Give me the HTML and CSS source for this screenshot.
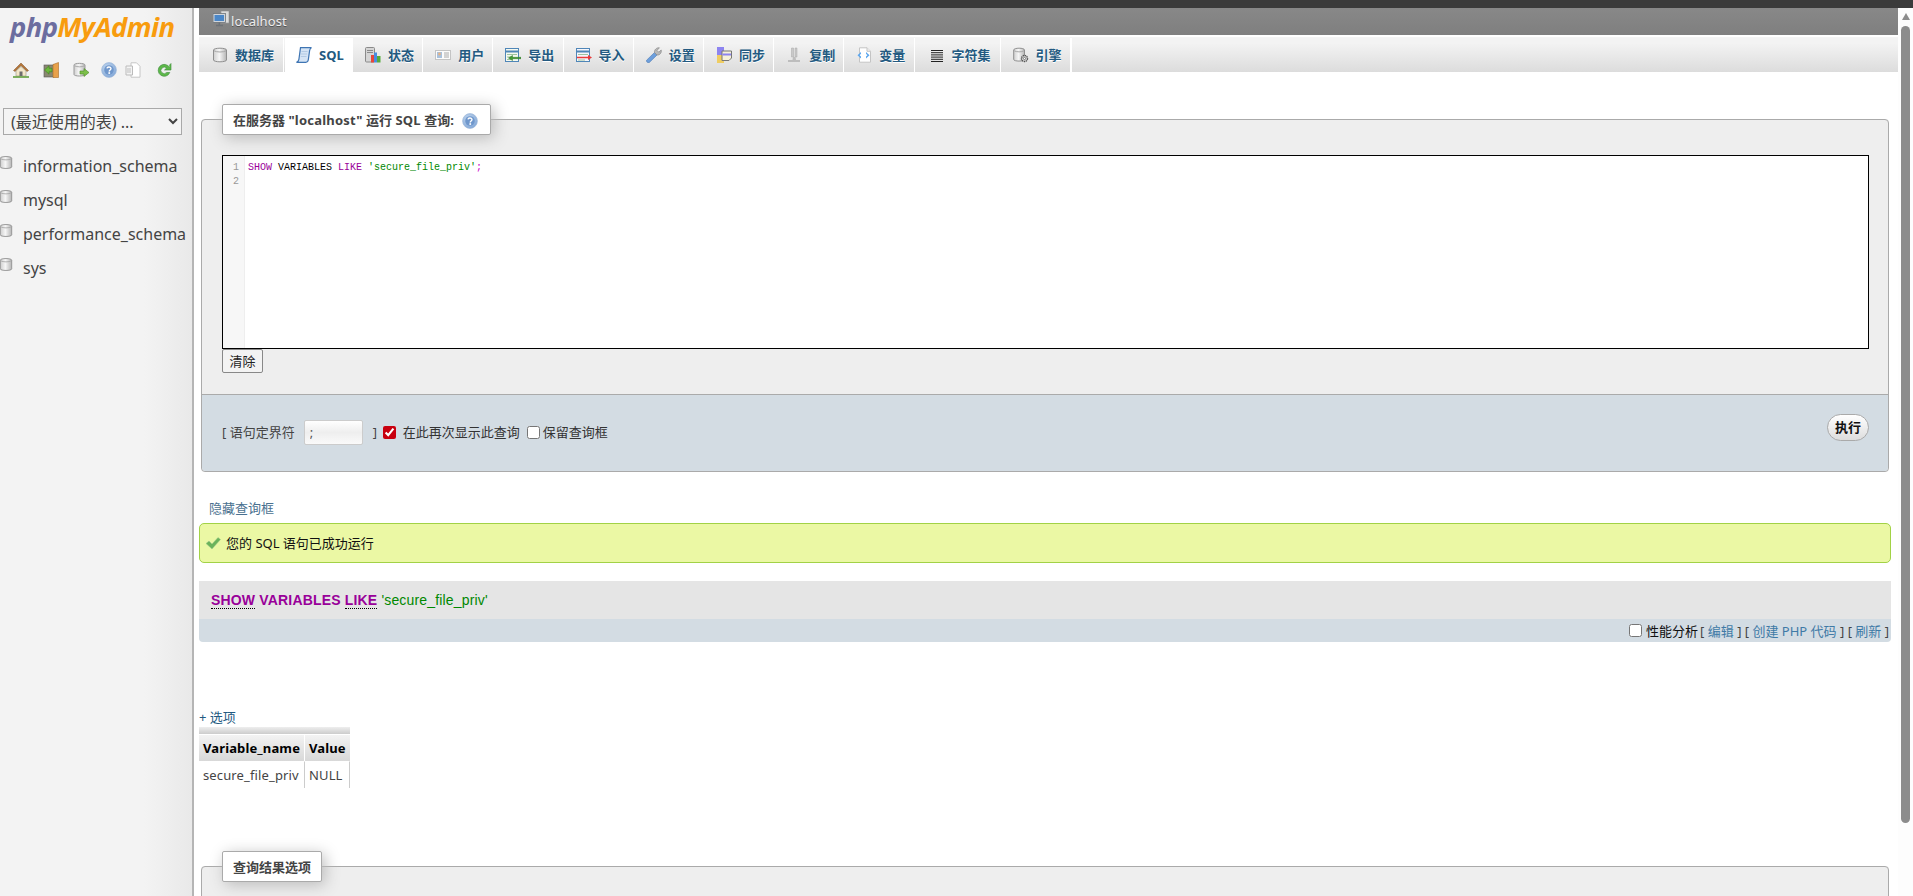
FILE: index.html
```html
<!DOCTYPE html>
<html lang="zh">
<head>
<meta charset="utf-8">
<title>localhost / phpMyAdmin</title>
<link rel="stylesheet" href="styles.css">
</head>
<body>
<svg class="sprite" xmlns="http://www.w3.org/2000/svg">
  <defs>
    <linearGradient id="g-db" x1="0" x2="1" y1="0" y2="0"><stop offset="0" stop-color="#cfcfcf"/><stop offset=".45" stop-color="#f6f6f6"/><stop offset="1" stop-color="#b5b5b5"/></linearGradient>
    <radialGradient id="g-help" cx=".4" cy=".35" r=".7"><stop offset="0" stop-color="#c6daf0"/><stop offset="1" stop-color="#7fa5d6"/></radialGradient>
    <symbol id="i-db" viewBox="0 0 16 16"><path d="M1.5 3C1.5 .6 14.5 .6 14.5 3V13C14.5 15.4 1.5 15.4 1.5 13Z" fill="url(#g-db)" stroke="#8f8f8f"/><path d="M2 3.8C4.5 5.4 11.5 5.4 14 3.8" fill="none" stroke="#a8a8a8"/></symbol>
    <symbol id="i-sql" viewBox="0 0 16 16"><path d="M4.5 .7H15.5C14.2 1.2 13.8 2.4 13.6 3.6L12.3 12.8C12.1 14.6 11.2 15.3 9.8 15.3H.4C2 15 2.7 14 2.9 12.4Z" fill="#d5e4f5" stroke="#3f75b3" stroke-width="1.2"/><path d="M5.5 4.5H11.5M5 7H11M4.8 9.5H10.5" stroke="#a9c3e0" stroke-width=".8"/></symbol>
    <symbol id="i-status" viewBox="0 0 16 16"><rect x=".5" y=".5" width="9" height="14.5" rx="1" fill="#d5d5d5" stroke="#8a8a8a"/><path d="M2 3.5H8M2 5.5H8" stroke="#8a8a8a"/><rect x="6" y="8" width="3" height="7.5" fill="#e8483b"/><rect x="9" y="5.5" width="3" height="10" fill="#4a8de0"/><rect x="12" y="9" width="3.5" height="6.5" fill="#55ab3c"/></symbol>
    <symbol id="i-user" viewBox="0 0 16 16"><rect x=".5" y="3.5" width="15" height="9" fill="#fbfbfb" stroke="#c4c4c4"/><rect x="2" y="5" width="5" height="6" fill="#a9c1dc"/><circle cx="4.5" cy="7" r="1.4" fill="#e5b285"/><path d="M9 6H14M9 8H14M9 10H14" stroke="#aaa"/></symbol>
    <symbol id="i-export" viewBox="0 0 16 16"><rect x=".5" y="1.5" width="13" height="13" fill="#f5f9f0" stroke="#4f86b8"/><path d="M.5 4.5H13.5" stroke="#4f86b8" stroke-width="2"/><path d="M2 7.5H12M2 10H6M2 12.5H6" stroke="#9ec4a0"/><path d="M16 10.3H7.5V8.5L3.5 11 7.5 13.5V11.7H16Z" fill="#3f9a34" stroke="#2c7424" stroke-width=".5"/></symbol>
    <symbol id="i-import" viewBox="0 0 16 16"><rect x=".5" y="1.5" width="13" height="13" fill="#f6f6fb" stroke="#4f86b8"/><path d="M.5 4.5H13.5" stroke="#4f86b8" stroke-width="2"/><path d="M2 7.5H12M2 13H9" stroke="#9ec4a0"/><path d="M1 9.7H12V8L16 10.5 12 13V11.2H1Z" fill="#ea3b3b"/></symbol>
    <symbol id="i-wrench" viewBox="0 0 16 16"><path d="M.6 13.2 8.5 5.5 11 8 3.3 15.5C1.8 16.2 -.1 14.7 .6 13.2Z" fill="#6e9fdc" stroke="#4a78b4" stroke-width=".6"/><path d="M8.5 5.6C8 2.8 10.8.4 13.4.8L11 3.4 12.8 5.2 15.2 3C15.8 6 13.6 8.4 11 8Z" fill="#b9b9b9" stroke="#8a8a8a" stroke-width=".7"/></symbol>
    <symbol id="i-sync" viewBox="0 0 16 16"><rect x="1" y="0" width="7" height="8" fill="#8d84f0"/><rect x="1" y="8" width="7" height="8" fill="#efcd62"/><path d="M6 4H15.5V11L13 13.5H6Z" fill="#f6f2da" stroke="#777"/><path d="M6.5 7.5H15" stroke="#8d84f0" stroke-width="2"/></symbol>
    <symbol id="i-repl" viewBox="0 0 16 16"><path d="M5.5 1H7.5V10H5.5ZM9 1H11V10H9Z" fill="#c9c9c9" stroke="#a8a8a8" stroke-width=".5"/><path d="M7 10H9.5L10 13H14V15H2V13H6.5Z" fill="#bdbdbd"/></symbol>
    <symbol id="i-vars" viewBox="0 0 16 16"><path d="M3.5 .8H11L14.5 4.3V15.2H3.5Z" fill="#fff" stroke="#c4c4c4"/><path d="M11 .8V4.3H14.5" fill="#eee" stroke="#c4c4c4"/><path d="M5 5 1.5 8.2 5 11.4V9.6L3.6 8.2 5 6.8ZM10 5 13.5 8.2 10 11.4V9.6L11.4 8.2 10 6.8Z" fill="#5ba6ee"/></symbol>
    <symbol id="i-charset" viewBox="0 0 16 16"><path d="M2 3.5H14M2 5.7H14M2 7.9H14M2 10.1H14M2 12.3H14M2 14.5H14" stroke="#222" stroke-width="1"/></symbol>
    <symbol id="i-engine" viewBox="0 0 16 16"><path d="M.7 3C.7 .6 11.5 .6 11.5 3V12.5C11.5 14.6 .7 14.6 .7 12.5Z" fill="url(#g-db)" stroke="#8f8f8f"/><path d="M1.2 3.8C3.5 5.2 8.7 5.2 11 3.8" fill="none" stroke="#a8a8a8"/><circle cx="11.5" cy="11.5" r="3" fill="#ddd" stroke="#555" stroke-width="1.4" stroke-dasharray="1.4 .6"/><circle cx="11.5" cy="11.5" r="1.1" fill="#fff" stroke="#555" stroke-width=".7"/></symbol>
    <symbol id="i-home" viewBox="0 0 16 16"><path d="M8 1 .5 8.5 2 9.5 8 3.8 14 9.5 15.5 8.5Z" fill="#b5763a" stroke="#7b4e24" stroke-width=".5"/><path d="M3 9 8 4.5 13 9V14H3Z" fill="#f3e6c8" stroke="#998" stroke-width=".6"/><rect x="6.5" y="9.5" width="3" height="4.5" fill="#6c6c6c"/><path d="M0 15H16" stroke="#5f9e3a" stroke-width="1.6"/></symbol>
    <symbol id="i-exit" viewBox="0 0 16 16"><rect x="1" y="3" width="10" height="12" fill="#8a8872" stroke="#555" stroke-width=".6"/><path d="M10 2.5 15.5 .5V15.5H10Z" fill="#e8a14b" stroke="#a96c25" stroke-width=".6"/><path d="M9 6.2H6V3.8L1.5 8 6 12.2V9.8H9Z" fill="#6cb83d" stroke="#3f7f1e" stroke-width=".6"/></symbol>
    <symbol id="i-sqldb" viewBox="0 0 16 16"><path d="M1 3C1 .8 12 .8 12 3V12.5C12 14.5 1 14.5 1 12.5Z" fill="url(#g-db)" stroke="#9a9a9a"/><path d="M1.5 3.8C4 5.2 9 5.2 11.5 3.8" fill="none" stroke="#aaa"/><path d="M7 9H11V6.5L16 10.5 11 14.5V12H7Z" fill="#7cbf4a" stroke="#4b8a26" stroke-width=".6"/></symbol>
    <symbol id="i-help" viewBox="0 0 16 16"><circle cx="8" cy="8" r="7.4" fill="url(#g-help)" stroke="#9db8da" stroke-width=".7"/><circle cx="8" cy="8" r="4.8" fill="#6f97cc"/><path d="M6 6.3C6.2 4.5 10 4.5 10 6.6 10 8 8.2 8 8.2 9.4" fill="none" stroke="#fff" stroke-width="1.4"/><rect x="7.4" y="10.2" width="1.7" height="1.7" fill="#fff"/></symbol>
    <symbol id="i-docs" viewBox="0 0 16 16"><path d="M6 .8H11.5L15 4.3V15.2H6Z" fill="#fff" stroke="#c6c6c6"/><path d="M1 4H7.5V13H1Z" fill="#f4f4f4" stroke="#bbb"/><path d="M3 6V11M5 6V11" stroke="#bdbdbd"/></symbol>
    <symbol id="i-reload" viewBox="0 0 16 16"><path d="M13.5 5.5A6 6 0 1 0 13.8 10.5H10.6A3.2 3.2 0 1 1 10.5 6.2L8.5 8H15V1.5L13.2 3.4" fill="#5cb848" stroke="#3d8a3a" stroke-width=".6"/></symbol>
    <symbol id="i-server" viewBox="0 0 16 16"><rect x="8" y="0" width="8" height="12" fill="#dcdcdc" stroke="#9b9b9b" stroke-width=".7"/><rect x="0" y="2.5" width="12.5" height="9" fill="#cfd4da" stroke="#6d7277" stroke-width=".8"/><rect x="1.5" y="4" width="9.5" height="6" fill="#4b87c8"/><path d="M3 14.5H10M6.3 11.5V14.5" stroke="#6d7277" stroke-width="1.4"/></symbol>
    <symbol id="i-check" viewBox="0 0 16 16"><path d="M1 8.5 4 6 7 9 13 2.5 15.5 4.5 7 14Z" fill="#6bb35a" stroke="#9fc98f" stroke-width=".5"/></symbol>
  </defs>
</svg>
<div class="topbar"></div>
<div class="app">
  <aside class="sidebar">
    <div class="logo"><span class="logo-php">php</span><span class="logo-my">MyAdmin</span></div>
    <div class="navicons">
      <svg class="nav-i"><use href="#i-home"/></svg>
      <svg class="nav-i"><use href="#i-exit"/></svg>
      <svg class="nav-i"><use href="#i-sqldb"/></svg>
      <svg class="nav-i"><use href="#i-help"/></svg>
      <svg class="nav-i"><use href="#i-docs"/></svg>
      <svg class="nav-i"><use href="#i-reload"/></svg>
    </div>
    <select class="recent"><option>(最近使用的表) ...</option></select>
    <ul class="dblist">
      <li><svg class="db-i"><use href="#i-db"/></svg><span>information_schema</span></li>
      <li><svg class="db-i"><use href="#i-db"/></svg><span>mysql</span></li>
      <li><svg class="db-i"><use href="#i-db"/></svg><span>performance_schema</span></li>
      <li><svg class="db-i"><use href="#i-db"/></svg><span>sys</span></li>
    </ul>
  </aside>
  <div class="divider"></div>
  <main class="main">
    <div class="crumb"><svg class="icon"><use href="#i-server"/></svg><span>localhost</span></div>
    <nav class="tabs">
      <a class="tab wide"><svg class="icon"><use href="#i-db"/></svg>数据库</a>
      <a class="tab active"><svg class="icon"><use href="#i-sql"/></svg>SQL</a>
      <a class="tab"><svg class="icon"><use href="#i-status"/></svg>状态</a>
      <a class="tab"><svg class="icon"><use href="#i-user"/></svg>用户</a>
      <a class="tab"><svg class="icon"><use href="#i-export"/></svg>导出</a>
      <a class="tab"><svg class="icon"><use href="#i-import"/></svg>导入</a>
      <a class="tab"><svg class="icon"><use href="#i-wrench"/></svg>设置</a>
      <a class="tab"><svg class="icon"><use href="#i-sync"/></svg>同步</a>
      <a class="tab"><svg class="icon"><use href="#i-repl"/></svg>复制</a>
      <a class="tab"><svg class="icon"><use href="#i-vars"/></svg>变量</a>
      <a class="tab wide"><svg class="icon"><use href="#i-charset"/></svg>字符集</a>
      <a class="tab"><svg class="icon"><use href="#i-engine"/></svg>引擎</a>
    </nav>

    <fieldset class="panel first">
      <legend class="panel-title">在服务器 <span class="latin">"localhost"</span> 运行 <span class="latin">SQL</span> 查询: <svg class="help"><use href="#i-help"/></svg></legend>
      <div class="panel-body">
        <div class="editor">
          <div class="gutter"><div>1</div><div>2</div></div>
          <div class="code"><span class="kw">SHOW</span> VARIABLES <span class="kw">LIKE</span> <span class="str">'secure_file_priv'</span><span class="semi">;</span></div>
        </div>
        <button class="btn-clear">清除</button>
      </div>
      <div class="panel-foot">
        <span>[ 语句定界符</span>
        <input class="delim" value=";">
        <span class="close-br">]</span>
        <input class="chk checked" type="checkbox" checked>
        <span class="lbl">在此再次显示此查询</span>
        <input class="chk chk2" type="checkbox">
        <span class="lbl lbl2">保留查询框</span>
        <button class="btn-go">执行</button>
      </div>
    </fieldset>

    <a class="hide-link">隐藏查询框</a>
    <div class="success"><svg class="icon"><use href="#i-check"/></svg><span>您的 SQL 语句已成功运行</span></div>
    <div class="sqlbox"><span class="kwb dot">SHOW</span> <span class="kwb">VARIABLES</span> <span class="kwb dot">LIKE</span> <span class="strb">'secure_file_priv'</span></div>
    <div class="toolbar">
      <input class="chk" type="checkbox">
      <span class="lbl-p">性能分析</span>
      <span class="br">[ <a>编辑</a> ] [ <a>创建 PHP 代码</a> ] [ <a>刷新</a> ]</span>
    </div>
    <a class="options">+ 选项</a>
    <table class="results">
      <thead>
        <tr class="strip"><th colspan="2"></th></tr>
        <tr><th>Variable_name</th><th>Value</th></tr>
      </thead>
      <tbody>
        <tr><td>secure_file_priv</td><td>NULL</td></tr>
      </tbody>
    </table>
    <fieldset class="panel second">
      <legend class="panel-title plain">查询结果选项</legend>
      <div class="panel-body"></div>
    </fieldset>
  </main>
  <div class="scrollbar">
    <div class="arrow"></div>
    <div class="thumb"></div>
  </div>
</div>
</body>
</html>
```
FILE: styles.css
```css
* { box-sizing: border-box; }
html, body { margin: 0; padding: 0; }
body {
  width: 1913px;
  height: 896px;
  overflow: hidden;
  display: flex;
  flex-direction: column;
  background: #fff;
  color: #444;
  font: 13px/18px "Noto Sans", "Noto Sans CJK SC", sans-serif;
}
.sprite { display: block; width: 0; height: 0; }
.topbar { height: 8px; flex: none; background: #3b3b3b; }
.app { flex: 1; display: flex; min-height: 0; }

/* sidebar */
.sidebar {
  width: 192px;
  flex: none;
  background: linear-gradient(to right, #f3f3f3 75%, #e9e9e9);
  overflow: hidden;
}
.logo {
  height: 38px;
  padding: 3px 0 0 10px;
  font: italic bold 27.4px/32px "Open Sans", sans-serif;
  letter-spacing: -.6px;
  white-space: nowrap;
}
.logo-php { color: #6c6d9f; }
.logo-my { color: #f89c0e; }
.navicons { display: flex; height: 62px; padding: 16px 0 0 13px; }
.nav-i { width: 16px; height: 16px; margin-right: 14px; }
.nav-i:nth-child(4) { margin-right: 8px; }
.nav-i:nth-child(3) { margin-right: 12px; }
.nav-i:nth-child(5) { margin-right: 15px; }
.recent {
  display: block;
  width: 179px;
  height: 27px;
  margin: 0 0 0 3px;
  padding: 0 0 0 3px;
  background: #f4f4f4;
  border: 1px solid #a9a9a9;
  border-radius: 0;
  color: #444;
  font: 16px "Noto Sans", "Noto Sans CJK SC", sans-serif;
}
.dblist { list-style: none; margin: 14px 0 0; padding: 0; }
.dblist li {
  display: flex;
  align-items: center;
  height: 34px;
  font-size: 16px;
  color: #444;
  white-space: nowrap;
}
.db-i { width: 14px; height: 15px; margin: -8px 10px 0 -1px; flex: none; }

.divider { width: 2px; flex: none; background: #b5b5b5; }

/* main */
.main { flex: 1; min-width: 0; margin-left: 5px; overflow: hidden; }
.icon { width: 16px; height: 16px; flex: none; }
.crumb {
  height: 27px;
  display: flex;
  align-items: center;
  gap: 2px;
  padding: 0 0 2px 14px;
  background: linear-gradient(to bottom, #888, #7f7f7f);
  color: #eee;
  letter-spacing: .1px;
  text-shadow: 0 1px 0 #555;
}
.crumb .icon { margin-top: -4px; }
.tabs {
  display: flex;
  height: 35px;
  margin-top: 2px;
  gap: 2px;
  background: linear-gradient(to bottom, #f3f3f3 15%, #dcdcdc);
  border-top: 1px solid #f4f4f4;
}
.tab {
  display: flex;
  align-items: center;
  gap: 7px;
  padding: 0 8.2px 0 11px;
  background: linear-gradient(to bottom, #f3f3f3 15%, #dcdcdc);
  box-shadow: 1px 0 0 #fff;
  color: #235a81;
  font-weight: 700;
  text-shadow: 0 1px 0 #fff;
  white-space: nowrap;
}
.tab:last-child { box-shadow: 1px 0 0 #fff, 2px 0 0 #fff; }
.tab.wide { padding: 0 9px 0 13px; }
.tab.active { background: #fff; }

/* panels */
.panel {
  min-width: 0;
  margin: 32px 9px 0 2px;
  padding: 0;
  background: #eee;
  border: 1px solid #aaa;
  border-radius: 4px;
}
.panel-title {
  display: flex;
  align-items: center;
  height: 31px;
  margin-left: 20px;
  padding: 0 12px 0 10px;
  background: #fff;
  border: 1px solid #aaa;
  border-radius: 2px;
  box-shadow: 3px 3px 15px #bbb;
  color: #444;
  font-weight: 700;
  white-space: pre;
}
.panel-title.plain { padding-right: 10px; }
.latin { letter-spacing: .22px; }
.help { width: 16px; height: 16px; margin: 2px 0 0 5px; }
.panel-body { padding: 20px 19px 21px 20px; }
.editor {
  display: flex;
  height: 194px;
  background: #fff;
  border: 1px solid #000;
  font: 10px/14px "Liberation Mono", monospace;
  color: #000;
}
.gutter {
  width: 22px;
  flex: none;
  padding: 5px 5px 0 0;
  background: #f7f7f7;
  border-right: 1px solid #eee;
  color: #999;
  text-align: right;
}
.code { padding: 5px 0 0 3px; white-space: pre; }
.kw { color: #909; }
.str { color: #080; }
.semi { color: #c0c; }
.btn-clear {
  display: block;
  width: 41px;
  height: 24px;
  margin: 0;
  padding: 0;
  background: #f3f3f3;
  border: 1px solid #888;
  border-radius: 2px;
  color: #222;
  font: inherit;
}
.panel-foot {
  display: flex;
  align-items: center;
  height: 77px;
  padding: 0 19px 2px 20px;
  background: #d3dce3;
  border-top: 1px solid #aaa;
  border-radius: 0 0 4px 4px;
  color: #444;
}
.delim {
  width: 59px;
  height: 25px;
  margin: 0 10px 0 9px;
  padding: 0 0 0 5px;
  background: linear-gradient(to bottom, #fff, #eee 50%, #fafafa);
  border: 1px solid #ccc;
  border-radius: 2px;
  color: #555;
  font: 13px "Noto Sans", sans-serif;
}
.close-br { width: 10px; }
.chk { width: 13px; height: 13px; margin: 0; flex: none; accent-color: #c8000f; }
.lbl { margin-left: 7px; color: #333; }
.chk2 { margin-left: 7px; }
.lbl2 { margin-left: 3px; }
.btn-go {
  width: 42px;
  height: 27px;
  margin: -9px 0 0 auto;
  padding: 0;
  background: linear-gradient(to bottom, #fff, #ddd);
  border: 1px solid #aaa;
  border-radius: 14px;
  color: #111;
  font: 700 13px/1 "Noto Sans", "Noto Sans CJK SC", sans-serif;
}
.first + .hide-link { margin-top: 27px; }
.hide-link { display: block; padding-left: 10px; height: 18px; color: #4a7190; }
.success {
  display: flex;
  align-items: center;
  gap: 5px;
  height: 40px;
  margin: 6px 7px 0 0;
  padding-left: 5px;
  background: #ebf8a4;
  border: 1px solid #a2d246;
  border-radius: 5px;
  color: #111;
}
.sqlbox {
  height: 38px;
  margin: 18px 7px 0 0;
  padding: 10px 0 0 12px;
  background: #e5e5e5;
  font: 14px/18px "Liberation Sans", sans-serif;
  letter-spacing: .17px;
}
.kwb { color: #909; font-weight: 700; }
.dot { border-bottom: 1px dotted #000; }
.strb { color: #080; }
.toolbar {
  display: flex;
  align-items: center;
  justify-content: flex-end;
  height: 23px;
  margin-right: 7px;
  padding-right: 2px;
  background: #d3dce3;
  border-radius: 0 0 4px 4px;
}
.toolbar .chk { margin-right: 4px; }
.lbl-p { color: #111; }
.br { margin-left: 2px; color: #444; white-space: pre; }
.br a { color: #3f7aa6; }
.options { display: block; height: 18px; margin-top: 66px; color: #235a81; }
.results { border-collapse: separate; border-spacing: 0; margin-top: 1px; letter-spacing: .13px; }
.results th {
  height: 26px;
  padding: 0 4px;
  background: linear-gradient(to bottom, #f3f3f3, #d8d8d8);
  border-right: 1px solid #fff;
  color: #000;
  text-align: left;
  font-weight: 700;
}
.results th:last-child { border-right: 0; }
.results .strip th { height: 8px; padding: 0; border-bottom: 1px solid #fff; background: linear-gradient(to bottom, #eee, #ccc); }
.results td {
  height: 27px;
  padding: 0 4px;
  border-right: 1px solid #ccc;
  border-top: 1px solid #fff;
  color: #444;
}
.panel.second { margin-top: 63px; height: 80px; }

/* scrollbar */
.scrollbar {
  width: 15px;
  flex: none;
  margin-left: 0;
  padding: 5px 3px 0;
  background: #fdfdfd;
  display: flex;
  flex-direction: column;
  align-items: center;
}
.arrow {
  width: 0;
  height: 0;
  border-left: 4.5px solid transparent;
  border-right: 4.5px solid transparent;
  border-bottom: 7px solid #8c8c8c;
}
.thumb { width: 9px; height: 797px; margin-top: 6px; background: #8c8c8c; border-radius: 5px; }
```
